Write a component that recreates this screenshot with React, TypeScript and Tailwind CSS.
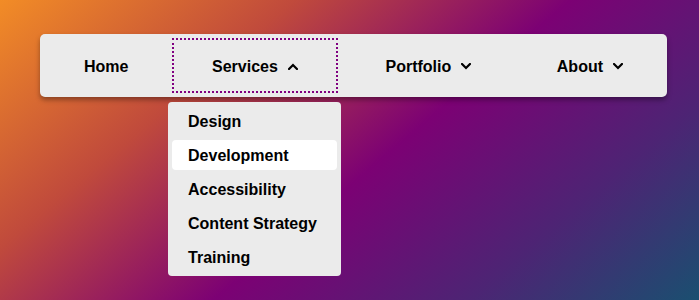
import { useState } from 'react'

const MENU = ['Home', 'Services', 'Portfolio', 'About']
const SERVICES = ['Design', 'Development', 'Accessibility', 'Content Strategy', 'Training']

function Chevron({ up }: { up?: boolean }) {
  return (
    <svg width="10" height="7" viewBox="0 0 10 7" className="shrink-0">
      <polyline
        points={up ? '1,6 5,2 9,6' : '1,1 5,5 9,1'}
        fill="none"
        stroke="#000"
        strokeWidth="2.2"
        strokeLinecap="square"
      />
    </svg>
  )
}

export default function App() {
  const [open] = useState('Services')
  const [active] = useState('Development')

  return (
    <main
      className="min-h-screen bg-[linear-gradient(140deg,#f28c26_0%,#c04a3c_28%,#7c0174_54%,#4d2474_78%,#1a4f70_100%)] pt-[34px] pl-10"
      style={{ fontFamily: '"Liberation Sans", Arial, sans-serif' }}
    >
      <nav className="w-[627px] h-[63px] bg-[#ebebeb] rounded-[5px] shadow-[0_3px_5px_rgba(0,0,0,0.35)] p-1">
        <ul className="flex justify-between h-full">
          {MENU.map(item => {
            const hasMenu = item !== 'Home'
            const isOpen = open === item
            return (
              <li key={item} className={'relative ' + (isOpen ? '-ml-[2px] mr-[2px]' : '')}>
                <button
                  className={
                    'h-[55px] px-10 pt-[2px] flex items-center gap-[10px] text-base font-bold text-black ' +
                    (isOpen ? 'outline-2 outline-dotted outline-[#800080] -outline-offset-2' : '')
                  }
                >
                  {item}
                  {hasMenu && <Chevron up={isOpen} />}
                </button>
                {isOpen && (
                  <ul className="absolute top-[64px] -left-1 w-[173px] bg-[#ebebeb] rounded-[4px] p-1 flex flex-col gap-1 z-10">
                    {SERVICES.map(s => (
                      <li
                        key={s}
                        className={
                          'h-[30px] flex items-center pl-4 pt-[2px] rounded-[4px] text-base font-bold text-black ' +
                          (s === active ? 'bg-white' : '')
                        }
                      >
                        {s}
                      </li>
                    ))}
                  </ul>
                )}
              </li>
            )
          })}
        </ul>
      </nav>
    </main>
  )
}
